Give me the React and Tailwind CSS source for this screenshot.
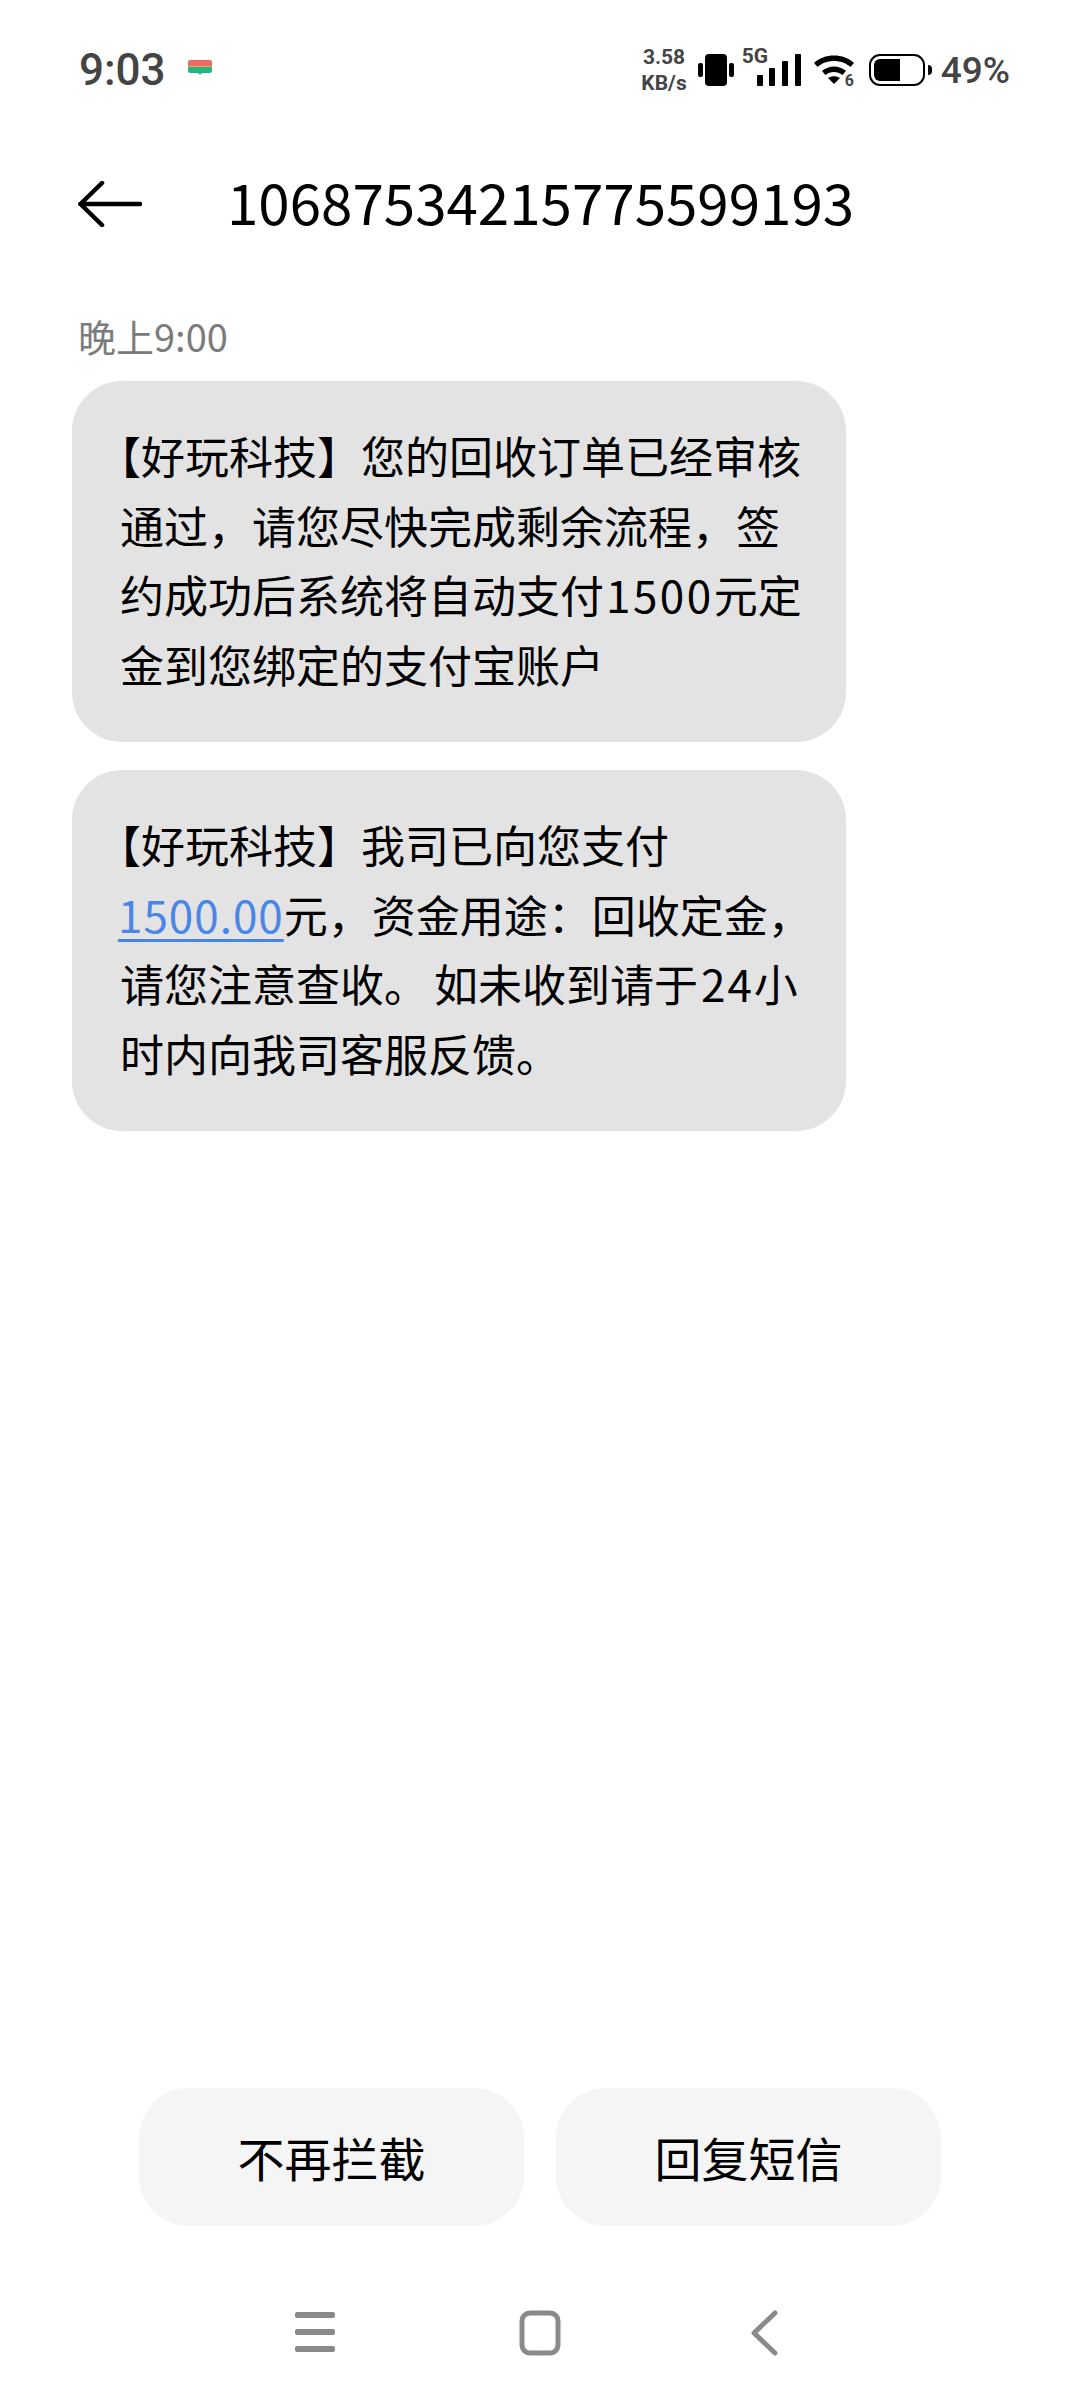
import React from "react";

const cjk = "font-['Noto_Sans_CJK_SC','Noto_Sans',sans-serif]";

function Bubble({ children }) {
  return (
    <div className="w-[774px] h-[361px] rounded-[50px] bg-[#e3e3e3] pl-[48px] pt-[40px] text-[44px] leading-[69.6px] text-black whitespace-nowrap">
      {children}
    </div>
  );
}

// the opening bracket sits at the line start in the reference, no half-cell gap
function Bracket() {
  return <span className="-ml-[23px]">【</span>;
}

function StatusBar() {
  return (
    <div className="h-[138px] pt-[2px] pl-[79px] pr-[70px] flex items-center justify-between text-[#444444] font-['Roboto',sans-serif]">
      <div className="flex items-center">
        <span className="text-[44px] leading-none font-medium">9:03</span>
        <svg width="24" height="15" viewBox="0 0 24 15" className="ml-[22px] mb-[6px]">
          <path d="M2 0h20a2 2 0 0 1 2 2v4H0V2a2 2 0 0 1 2-2z" fill="#ee6a5f" />
          <path d="M0 6h24v1H0z" fill="#e8b04a" />
          <path d="M0 7h24v4a2 2 0 0 1-2 2h-8l-2 2-2-2H2a2 2 0 0 1-2-2z" fill="#22b58a" />
        </svg>
      </div>
      <div className="flex items-center">
        <div className="flex flex-col items-center text-[21px] leading-[26px] font-bold mr-[11px]">
          <span>3.58</span>
          <span>KB/s</span>
        </div>
        <svg width="36" height="32" viewBox="0 0 36 32" className="mr-[8px]">
          <rect x="7" y="0" width="22" height="32" rx="4" fill="#000" />
          <rect x="0" y="9" width="5" height="14" rx="2" fill="#000" />
          <rect x="31" y="9" width="5" height="14" rx="2" fill="#000" />
        </svg>
        <div className="relative w-[60px] h-[32px] mr-[12px]">
          <span className="absolute left-0 top-[-8px] text-[21px] leading-none font-bold">5G</span>
          <svg width="44" height="32" viewBox="0 0 44 32" className="absolute left-[15px] top-0">
            <rect x="0" y="21" width="6" height="11" rx="1" fill="#000" />
            <rect x="12" y="14" width="6" height="18" rx="1" fill="#000" />
            <rect x="25" y="7" width="6" height="25" rx="1" fill="#000" />
            <rect x="38" y="0" width="6" height="32" rx="1" fill="#000" />
          </svg>
        </div>
        <div className="relative w-[42px] h-[32px] mr-[13px]">
          <svg width="40" height="32" viewBox="0 0 40 32">
            <path d="M0 9C10-1 30-1 40 9l-3.600 4C28 5 12 5 3.600 13z" fill="#000" />
            <path d="M8 17c7-6 17-6 24 0l-3.600 4c-5-4-12-4-17 0z" fill="#000" />
            <path d="M14 24c4-2.500 8-2.500 12 0l-6 6z" fill="#000" />
          </svg>
          <span className="absolute left-[31px] top-[19px] text-[16px] leading-none font-bold">6</span>
        </div>
        <div className="w-[56px] h-[32px] rounded-[11px] border-[2.500px] border-black p-[3px] mr-[3px]">
          <div className="w-[26px] h-full bg-black rounded-l-[6px]" />
        </div>
        <div className="w-[4px] h-[10px] bg-black rounded-r-[4px] mr-[9px]" />
        <span className="text-[37px] leading-none font-medium">49%</span>
      </div>
    </div>
  );
}

export default function App() {
  return (
    <div className={`w-[1080px] h-[2400px] bg-white flex flex-col ${cjk}`}>
      <StatusBar />

      <div className="h-[132px] flex items-center pl-[78px]">
        <svg width="64" height="46" viewBox="0 0 64 46" fill="none" stroke="#000" strokeWidth="4.500" strokeLinecap="round" strokeLinejoin="round">
          <path d="M2.500 23H62" />
          <path d="M24 2 2.500 23 24 44" />
        </svg>
        <span className="ml-[85px] mb-[7px] text-[56.500px] leading-none text-black">10687534215775599193</span>
      </div>

      <div className="mt-[42px] pl-[78px] text-[38px] leading-[48px] text-[#7b7b7b]">晚上9:00</div>

      <div className="mt-[21px] ml-[72px] flex flex-col gap-[28px]">
        <Bubble>
          <Bracket />好玩科技】您的回收订单已经审核
          <br />
          通过，请您尽快完成剩余流程，签
          <br />
          约成功后系统将自动支付<span className="ml-[2px] tracking-[2.500px]">1500</span>元定
          <br />
          金到您绑定的支付宝账户
        </Bubble>
        <Bubble>
          <Bracket />好玩科技】我司已向您支付
          <br />
          <span className="-ml-[2px] text-[#4a86e8] underline decoration-[3px] underline-offset-[6px] tracking-[1px]">1500.00</span>元，资金用途：回收定金，
          <br />
          请您注意查收<span className="tracking-[6px]">。</span>如未收到请于<span className="ml-[3px] tracking-[2px]">24</span>小
          <br />
          时内向我司客服反馈。
        </Bubble>
      </div>

      <div className="mt-auto pl-[139px] flex gap-[32px]">
        <button className="w-[385px] h-[138px] rounded-[50px] bg-[#f5f5f5] text-[47px] text-black">不再拦截</button>
        <button className="w-[385px] h-[138px] rounded-[50px] bg-[#f5f5f5] text-[47px] text-black">回复短信</button>
      </div>

      <div className="h-[174px] pt-[84px] pl-[295px] flex items-start">
        <svg width="40" height="44" viewBox="0 0 40 44" fill="#8a8a8a">
          <rect x="0" y="2" width="40" height="6" rx="2" />
          <rect x="0" y="19" width="40" height="6" rx="2" />
          <rect x="0" y="36" width="40" height="6" rx="2" />
        </svg>
        <svg width="42" height="46" viewBox="0 0 42 46" fill="none" stroke="#8a8a8a" strokeWidth="5" className="ml-[184px]">
          <rect x="3" y="3" width="36" height="40" rx="8" />
        </svg>
        <svg width="28" height="46" viewBox="0 0 28 46" fill="none" stroke="#8a8a8a" strokeWidth="5" strokeLinecap="round" strokeLinejoin="round" className="ml-[189px]">
          <path d="M25 3 4 23l21 20" />
        </svg>
      </div>
    </div>
  );
}
